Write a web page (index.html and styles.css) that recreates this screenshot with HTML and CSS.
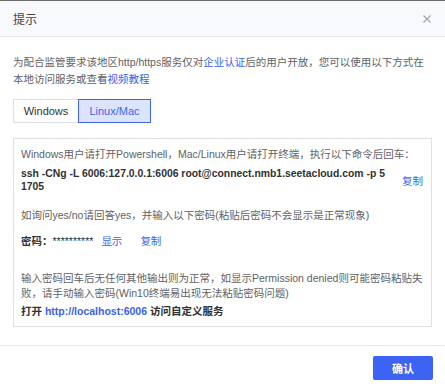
FILE: index.html
```html
<!DOCTYPE html>
<html lang="zh">
<head>
<meta charset="utf-8">
<link rel="stylesheet" href="styles.css">
</head>
<body>
<div class="dialog">
  <div class="header">
    <span class="title">提示</span>
    <span class="close"><svg width="8" height="8" viewBox="0 0 8 8"><path d="M0.5 0.5L7.5 7.5M7.5 0.5L0.5 7.5" stroke="#a0a3a8" stroke-width="1.1"/></svg></span>
  </div>
  <div class="body">
    <p class="intro">为配合监管要求该地区http/https服务仅对<a class="link">企业认证</a>后的用户开放，您可以使用以下方式在本地访问服务或查看<a class="link">视频教程</a></p>
    <div class="tabs">
      <span class="tab">Windows</span>
      <span class="tab active">Linux/Mac</span>
    </div>
    <div class="box">
      <p class="line">Windows用户请打开Powershell，Mac/Linux用户请打开终端，执行以下命令后回车：</p>
      <div class="cmd-row">
        <span class="cmd">ssh -CNg -L 6006:127.0.0.1:6006 root@connect.nmb1.seetacloud.com -p 51705</span>
        <a class="link copy">复制</a>
      </div>
      <p class="line ask">如询问yes/no请回答yes，并输入以下密码(粘贴后密码不会显示是正常现象)</p>
      <div class="pwd-row">
        <span class="pwd-label">密码：</span><span class="pwd">**********</span>
        <a class="link show">显示</a>
        <a class="link">复制</a>
      </div>
      <p class="line note">输入密码回车后无任何其他输出则为正常，如显示Permission denied则可能密码粘贴失败，请手动输入密码(Win10终端易出现无法粘贴密码问题)</p>
      <p class="open">打开 <a class="link strong">http://localhost:6006</a> 访问自定义服务</p>
    </div>
  </div>
  <div class="footer">
    <button class="btn">确认</button>
  </div>
</div>
</body>
</html>
```

FILE: styles.css
```css
* { box-sizing: border-box; }
html, body { margin: 0; padding: 0; background: #fff; }
body {
  font-family: "Liberation Sans", "Noto Sans CJK SC", sans-serif;
  font-size: 10.5px;
  color: #606266;
  width: 445px;
  height: 390px;
  overflow: hidden;
}
p { margin: 0; }
.dialog {
  border-top: 1px solid #6e6e6e;
}
.header {
  height: 36px;
  background: #f7f9fc;
  border-bottom: 1px solid #e4e7ed;
  display: flex;
  align-items: center;
  justify-content: space-between;
  padding: 0 13px;
}
.title { font-size: 12px; color: #444; }
.close { display: flex; align-items: center; margin-right: 1px; }
.body { padding: 17px 13px 0; }
.intro { line-height: 17px; }
.link { color: #3a62f0; cursor: pointer; }
.tabs { display: flex; margin-top: 11px; }
.tab {
  height: 24px;
  display: flex;
  align-items: center;
  justify-content: center;
  border: 1px solid #dcdfe6;
  color: #333;
  width: 66px;
  font-size: 11px;
}
.tab.active {
  width: 73px;
  margin-left: -1px;
  border-color: #3d63f5;
  background: #dce4fd;
  color: #3d63f5;
}
.box {
  margin-top: 15px;
  border: 1px solid #dcdfe6;
  padding: 8px 7px 9px;
  height: 189px;
}
.line { line-height: 15px; }
.cmd-row { display: flex; align-items: center; margin-top: 5px; }
.cmd {
  flex: 0 0 369px;
  font-weight: bold;
  font-size: 10.4px;
  color: #303133;
  line-height: 13px;
  word-break: break-all;
}
.copy { margin-left: auto; margin-right: 1px; }
.ask { margin-top: 15px; }
.pwd-row { margin-top: 11px; line-height: 15px; display: flex; align-items: center; }
.pwd-label { font-weight: bold; color: #303133; }
.pwd { color: #303133; margin-right: 8px; }
.show { margin-right: 18px; }
.note { margin-top: 22px; }
.open { margin-top: 3px; line-height: 15px; color: #303133; font-weight: bold; }
.strong { font-weight: bold; }
.footer {
  margin-top: 18px;
  border-top: 1px solid #e4e7ed;
  display: flex;
  justify-content: flex-end;
  padding: 10px 12px 0;
}
.btn {
  width: 60px;
  height: 24px;
  border: none;
  border-radius: 2px;
  background: #3d63f5;
  color: #fff;
  font-family: "Liberation Sans", "Noto Sans CJK SC", sans-serif;
  font-size: 11px;
  font-weight: bold;
}
```
